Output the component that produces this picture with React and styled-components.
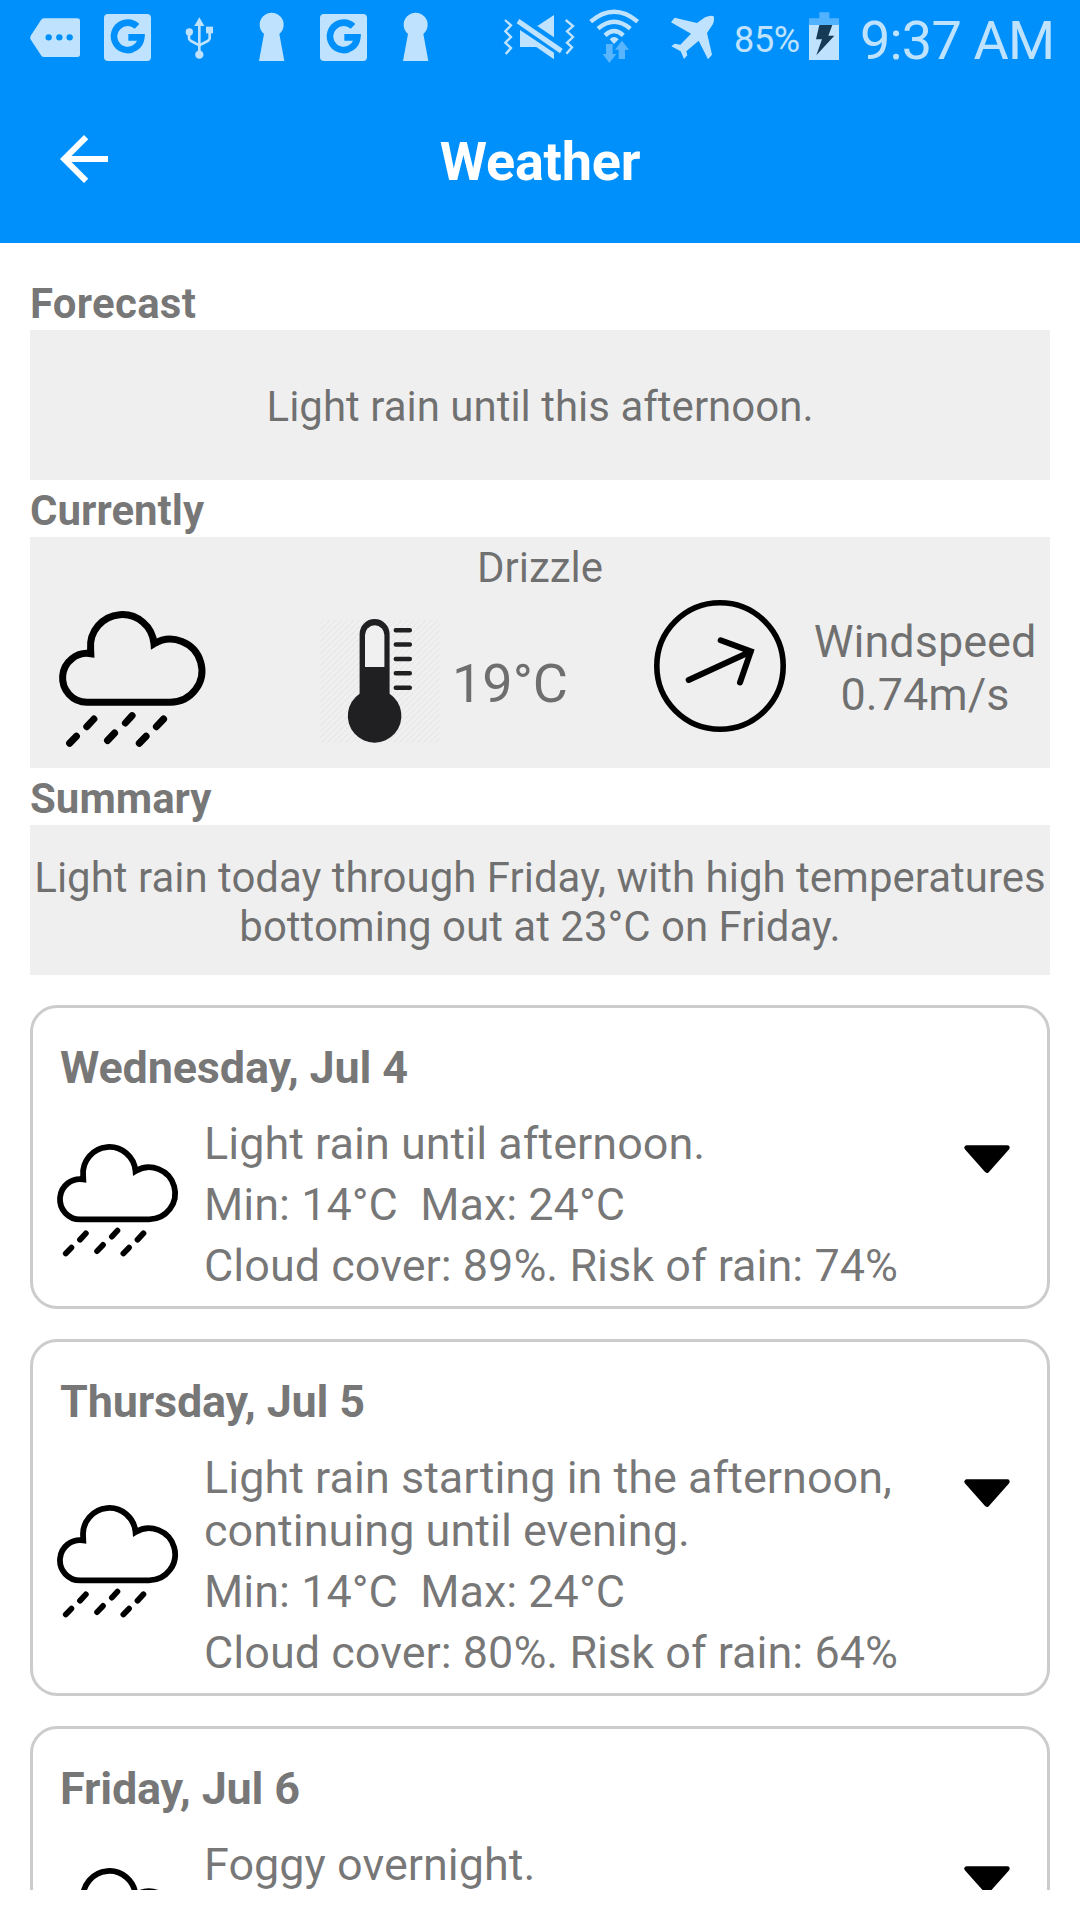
import React, { Component } from 'react'
import styled, { createGlobalStyle } from 'styled-components'

const days = [
  {
    title: 'Wednesday, Jul 4',
    summary: 'Light rain until afternoon.',
    details: [
      'Min: 14°C  Max: 24°C',
      'Cloud cover: 89%. Risk of rain: 74%',
    ],
  },
  {
    title: 'Thursday, Jul 5',
    summary: 'Light rain starting in the afternoon, continuing until evening.',
    details: [
      'Min: 14°C  Max: 24°C',
      'Cloud cover: 80%. Risk of rain: 64%',
    ],
  },
  {
    title: 'Friday, Jul 6',
    summary: 'Foggy overnight.',
    details: [],
    iconShift: 3,
  },
]

const RainIcon = ({ width, height }) => (
  <svg width={width} height={height} viewBox="0 0 146.4 136" preserveAspectRatio="none" fill="none" stroke="#000" strokeWidth="7">
    <path d="M31.8 42.7A24.4 24.4 0 1 0 27.9 91.2H111.4A31.5 31.5 0 1 0 95 32.8A31.7 31.7 0 0 0 31.6 38Z" strokeMiterlimit="6" />
    <path
      d="M34.9 108L27.8 115.7M17.4 125.3L10.6 132.3M73.1 104.7L66.4 112M55.6 122L48.5 129.5M104.6 108L97.4 115.7M87.1 125.3L80.3 132.3"
      strokeLinecap="round"
    />
  </svg>
)

const ThermometerIcon = () => (
  <svg width="120" height="126" viewBox="0 0 120 126">
    <defs>
      <pattern id="hatch" width="6" height="6" patternUnits="userSpaceOnUse">
        <path d="M-1 7L7 -1" stroke="#e8e8e8" strokeWidth="1.4" />
      </pattern>
    </defs>
    <rect y="2" width="120" height="123" fill="#f0f0f0" />
    <rect y="2" width="120" height="123" fill="url(#hatch)" />
    <path d="M39.6 60V16a15 15 0 0 1 30 0V75.7a26.8 26.8 0 1 1 -30 0Z" fill="#202023" />
    <path d="M45 49V17a9.7 9.7 0 0 1 19.4 0V49Z" fill="#f0f0f0" />
    <path d="M75.8 12.2H89.8M75.8 26.6H89.8M75.8 41H89.8M75.8 55.3H89.8M75.8 69.7H89.8" stroke="#202023" strokeWidth="4.5" strokeLinecap="round" />
  </svg>
)

const WindIcon = () => (
  <svg width="132" height="132" viewBox="0 0 132 132" fill="none" stroke="#000" strokeWidth="6">
    <circle cx="66" cy="66" r="63.2" strokeWidth="5.6" />
    <path d="M34.7 80L96.8 51.6M66.7 40.3L96.8 51.4L86 82.5" strokeLinecap="round" />
  </svg>
)

const ArrowDown = () => (
  <svg width="46" height="28" viewBox="0 0 46 28">
    <path d="M2.6 2.6H43.4L23 25.6Z" stroke="#000" strokeWidth="4.6" strokeLinejoin="round" />
  </svg>
)

const BackArrow = () => (
  <svg width="72" height="72" viewBox="0 0 24 24" fill="#fff">
    <path d="M20 11H7.83l5.59-5.59L12 4l-8 8 8 8 1.41-1.41L7.83 13H20v-2z" />
  </svg>
)

// status icons share a 3x grid, 225 units tall
const TagIcon = () => (
  <svg width="72" height="75" viewBox="0 0 216 225" fill={pale}>
    <path d="M74 55H175a8 8 0 0 1 8 8V163a8 8 0 0 1 -8 8H74Q69 171 66 166L36 120Q31 113 36 106L66 60Q69 55 74 55Z" />
    <g fill={blue}>
      <circle cx="89" cy="112" r="9.5" />
      <circle cx="121" cy="112" r="9.5" />
      <circle cx="152" cy="112" r="9.5" />
    </g>
  </svg>
)

const GIcon = () => (
  <svg width="72" height="75" viewBox="0 0 216 225">
    <rect x="39" y="42" width="141" height="141" rx="12" fill={pale} />
    <path d="M138 79A41 41 0 1 0 151 112H112" fill="none" stroke={blue} strokeWidth="20" />
  </svg>
)

const UsbIcon = () => (
  <svg width="72" height="75" viewBox="0 0 216 225" fill={pale}>
    <path d="M109 52L124 78H94Z" />
    <path d="M109 75V165M78 98V115Q78 120 84 123L109 136M140 98V115Q140 120 134 123L109 136" fill="none" stroke={pale} strokeWidth="8" />
    <circle cx="79" cy="96" r="11" />
    <circle cx="109" cy="164" r="12.5" />
    <rect x="129" y="80" width="21" height="20" />
  </svg>
)

const KeyholeIcon = () => (
  <svg width="72" height="75" viewBox="0 0 216 225" fill={pale}>
    <path d="M72 183L87 102A36 36 0 1 1 133 102L148 183Z" />
  </svg>
)

const MuteIcon = () => (
  <svg width="85" height="75" viewBox="0 0 255 225" fill={pale}>
    <path d="M30 60L48 76L31 94L48 111L31 128L48 144L32 162M212 60L234 78L216 94L234 111L216 128L231 142L214 161" fill="none" stroke={pale} strokeWidth="7" />
    <path d="M177 45V112L127 78Z" />
    <path d="M75 90L177 158V178L124 141H75Z" />
    <path d="M73 57L203 146L195 160L65 70Z" />
  </svg>
)

const WifiIcon = () => (
  <svg width="75" height="75" viewBox="255 0 225 225">
    <path d="M287 65Q357 6 428 65M309 86Q357 44 406 86M330 106Q357 80 385 106" fill="none" stroke={pale} strokeWidth="13" />
    <path d="M344 118Q357 104 371 118L357 132Z" fill={pale} />
    <path d="M333 132H353V162H364L343 189L323 162H333ZM371 177H390V149H402L381 122L360 149H371Z" fill="#58b5fe" />
  </svg>
)

const PlaneIcon = () => (
  <svg width="70" height="75" viewBox="480 0 210 225" fill={pale}>
    <path d="M539 53L606 69L630 52Q645 45 655 48Q660 56 654 72L636 99L651 164L639 178L611 122L574 154L577 166L567 177L557 154L529 139L539 131L556 134L588 101L528 67Z" />
  </svg>
)

const BatteryIcon = () => (
  <svg width="40" height="75" viewBox="252 0 120 225">
    <path d="M298 37H328V55H357V75H267V55H298Z" fill="#52b2fd" />
    <path d="M267 75H357V180H267Z" fill={pale} />
    <path d="M298 75H337L325 107H343L289 166L306 118H288Z" fill="#153b57" />
  </svg>
)

class DayCard extends Component {
  render(){
    const { title, summary, details, iconShift } = this.props
    return (<Card>
      <DayTitle>{title}</DayTitle>
      <DayBody>
        <IconCell $shift={iconShift || 0}>
          <RainIcon width="121" height="112.5" />
        </IconCell>
        <DayText>
          <DayLine>{summary}</DayLine>
          {details.map((line) => (<DayLine key={line}>{line}</DayLine>))}
        </DayText>
        <ArrowCell>
          <ArrowDown />
        </ArrowCell>
      </DayBody>
    </Card>)
  }
}

class App extends Component {
  render(){
    return (<Screen>
      <GlobalStyle />
      <StatusBar>
        <TagIcon />
        <GIcon />
        <UsbIcon />
        <KeyholeIcon />
        <GIcon />
        <KeyholeIcon />
        <StatusRight>
          <MuteIcon />
          <WifiIcon />
          <PlaneIcon />
          <Percent>85%</Percent>
          <BatteryIcon />
          <Clock>9:37 AM</Clock>
        </StatusRight>
      </StatusBar>
      <AppBar>
        <BackArrow />
        <Title>Weather</Title>
        <AppBarEnd />
      </AppBar>
      <Content>
        <Label $spacing={0.25}>Forecast</Label>
        <Panel $height={150}>
          <PanelText>Light rain until this afternoon.</PanelText>
        </Panel>
        <Label>Currently</Label>
        <Panel $height={231} $top>
          <PanelText>Drizzle</PanelText>
          <NowRow>
            <NowIcon>
              <RainIcon width="146.4" height="136" />
            </NowIcon>
            <NowTemp>
              <ThermometerIcon />
              <Temperature>19°C</Temperature>
            </NowTemp>
            <NowWind>
              <WindIcon />
              <WindText>
                <span>Windspeed</span>
                <span>0.74m/s</span>
              </WindText>
            </NowWind>
          </NowRow>
        </Panel>
        <Label>Summary</Label>
        <Panel $height={150}>
          <PanelText>
            Light rain today through Friday, with high temperatures bottoming out at 23°C on Friday.
          </PanelText>
        </Panel>
        {days.map((day) => (<DayCard key={`${day.title}_card`} {...day} />))}
      </Content>
    </Screen>)
  }
}

export default App


const blue = '#0090fc'
const pale = '#bfe3fe'
const textColor = 'rgba(0, 0, 0, 0.54)'

const GlobalStyle = createGlobalStyle`
  body {
    margin: 0;
    background: #fff;
    font-family: Roboto, sans-serif;
  }
  svg {
    display: block;
    flex: none;
    overflow: visible;
  }
`

const Screen = styled.div`
  display: flex;
  flex-direction: column;
  width: 1080px;
  height: 1890px;
  overflow: hidden;
  color: ${textColor};
`

const StatusBar = styled.div`
  display: flex;
  flex: none;
  box-sizing: border-box;
  height: 75px;
  padding-left: 19px;
  background: ${blue};
  color: ${pale};
  white-space: nowrap;
`

const StatusRight = styled.div`
  display: flex;
  margin-left: 44px;
`

const Percent = styled.div`
  width: 70px;
  margin-left: 9px;
  padding-top: 19px;
  font-size: 36px;
  line-height: 42px;
  letter-spacing: -0.3px;
`

const Clock = styled.div`
  margin-left: 16px;
  padding-top: 9px;
  font-size: 54px;
  line-height: 63px;
  letter-spacing: -0.8px;
`

const AppBar = styled.div`
  display: flex;
  flex: none;
  align-items: center;
  box-sizing: border-box;
  height: 168px;
  padding: 0 48px;
  background: ${blue};
`

const AppBarEnd = styled.div`
  width: 72px;
`

const Title = styled.div`
  flex: 1;
  padding-top: 4px;
  text-align: center;
  color: #fff;
  font-size: 54px;
  font-weight: 700;
  line-height: 63px;
  letter-spacing: -0.2px;
`

const Content = styled.div`
  flex: 1;
  min-height: 0;
  overflow: hidden;
  padding: 30px 30px 0;
`

const Label = styled.div`
  padding: 6px 0 2px;
  font-size: 42px;
  font-weight: 700;
  line-height: 49px;
  letter-spacing: ${props => props.$spacing || 0}px;
`

const Panel = styled.div`
  display: flex;
  flex-direction: column;
  justify-content: ${props => props.$top ? 'flex-start' : 'center'};
  height: ${props => props.$height}px;
  background: #efefef;
`

const PanelText = styled.div`
  padding: 5px 0 2px;
  text-align: center;
  font-size: 42px;
  line-height: 49px;
  &:not(:only-child) {
    padding-top: 6px;
  }
`

const NowRow = styled.div`
  display: flex;
  flex: 1;
`

const NowIcon = styled.div`
  width: 261px;
  padding: 17px 0 0 29px;
`

const NowTemp = styled.div`
  display: flex;
  align-items: flex-start;
  width: 334px;
  padding-top: 24px;
`

const Temperature = styled.div`
  margin-left: 12px;
  padding-top: 34px;
  font-size: 54px;
  line-height: 63px;
`

const NowWind = styled.div`
  display: flex;
  flex: 1;
  align-items: flex-start;
  padding-top: 6px;
`

const WindText = styled.div`
  display: flex;
  flex: 1;
  flex-direction: column;
  align-items: center;
  padding: 15px 0 0 14px;
  font-size: 45px;
  line-height: 53px;
`

const Card = styled.div`
  box-sizing: border-box;
  margin: 30px 0;
  padding: 27px 27px 12px;
  border: 3px solid #ccc;
  border-radius: 27px;
`

const DayTitle = styled.div`
  padding: 6px 0 2px;
  font-size: 45px;
  font-weight: 700;
  line-height: 53px;
  letter-spacing: -0.2px;
`

const DayBody = styled.div`
  display: flex;
  min-height: 183px;
  margin-top: 15px;
`

const IconCell = styled.div`
  display: flex;
  flex: none;
  align-items: center;
  width: 144px;
  margin-left: -3px;
  padding-top: ${props => props.$shift * 2}px;
  padding-bottom: 4px;
`

const DayText = styled.div`
  flex: 1;
  padding-left: 3px;
`

const DayLine = styled.div`
  padding: 6px 0 2px;
  font-size: 45px;
  line-height: 53px;
  white-space: pre-wrap;
`

const ArrowCell = styled.div`
  flex: none;
  width: 56px;
  padding-top: 34px;
`
